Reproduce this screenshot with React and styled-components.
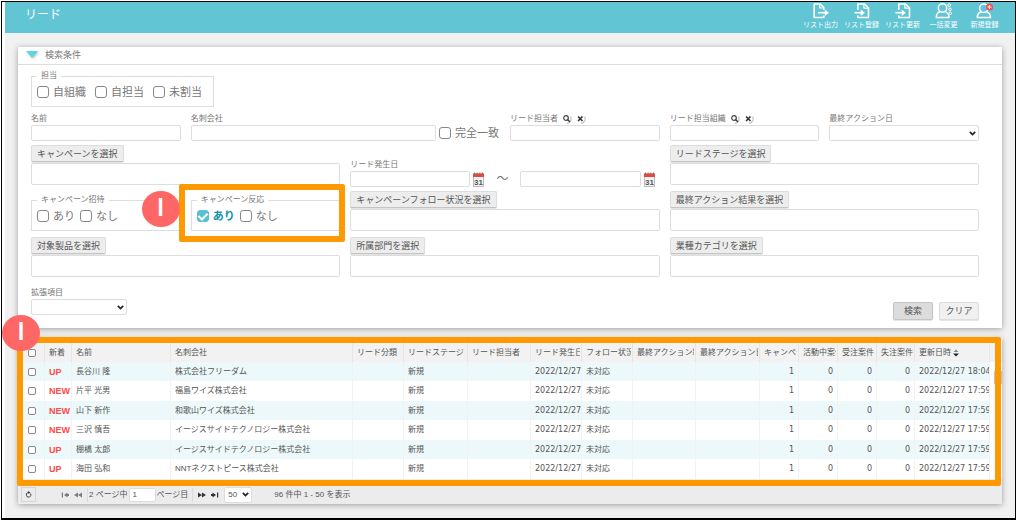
import React, { useState } from 'react';
import styled, { createGlobalStyle } from 'styled-components';

const GlobalStyle = createGlobalStyle`
  * { box-sizing: border-box; }
  body {
    margin: 0;
    background: #fff;
    color: #777;
    font-family: "Liberation Sans", "Noto Sans CJK JP", sans-serif;
    font-size: 8px;
    line-height: 12px;
  }
  button, input, select {
    font-family: inherit;
    color: inherit;
    margin: 0;
  }
`

const Frame = styled.div`
  display: flex;
  flex-direction: column;
  min-height: calc(100vh - 1px);
  margin: 1px 0 0 1px;
  padding-left: 3px;
  border: 1px solid #000;
  border-bottom-width: 2px;
`
const TopBar = styled.header`
  display: flex;
  justify-content: space-between;
  height: 31px;
  padding: 0 10px 0 20px;
  background: #62c5d4;
  color: #fff;
  h1 {
    margin: 0;
    font-size: 12px;
    font-weight: 400;
    line-height: 27px;
  }
`
const Tools = styled.nav`
  display: flex;
`
const ToolButton = styled.button`
  display: flex;
  flex-direction: column;
  align-items: center;
  width: 41px;
  padding: 0;
  border: 0;
  background: none;
  font-size: 7px;
  line-height: 10px;
  white-space: nowrap;
  svg {
    width: 18px;
    height: 18px;
  }
`
const Page = styled.main`
  display: flex;
  flex-direction: column;
  flex: 1;
  gap: 10px;
  padding: 14px 13px;
  background: #f1f1f1;
`
const Card = styled.section`
  background: #fff;
  box-shadow: 0 1px 6px rgba(0, 0, 0, 0.35);
`
const CardTitle = styled.button`
  display: flex;
  align-items: center;
  gap: 7px;
  width: 100%;
  height: 18px;
  padding: 0 8px 2px;
  border: 0;
  border-bottom: 1px solid #ddd;
  background: #fff;
  font-size: 9px;
  svg {
    width: 12px;
    height: 7px;
    filter: drop-shadow(1px 1px 1px rgba(0, 0, 0, 0.25));
  }
`
const Form = styled.form`
  padding: 6px 23px 8px 13px;
`
const Grid = styled.div`
  display: grid;
  grid-template-columns: repeat(6, minmax(0, 1fr));
  gap: 4px 10px;
  margin-top: 6px;
`
const Cell = styled.div`
  display: flex;
  flex-direction: column;
  align-self: end;
  grid-column: span ${props => props.$span || 1};
`
const Group = styled.fieldset`
  min-width: 0;
  width: ${props => (props.$inline ? 'fit-content' : '100%')};
  margin: 0 0 2px;
  padding: 5px 11px 8px 5px;
  border: 1px solid #ddd;
  legend {
    padding: 0 4px;
    line-height: 10px;
  }
`
const Options = styled.div`
  display: flex;
  gap: ${props => props.$gap || 5}px;
`
const CheckLabel = styled.label`
  display: flex;
  align-items: center;
  gap: 4px;
  font-size: 11px;
  line-height: 12px;
  white-space: nowrap;
  input:checked + span {
    color: #0b93ad;
    font-weight: 700;
  }
`
const CheckBox = styled.input.attrs({ type: 'checkbox' })`
  appearance: none;
  display: flex;
  align-items: center;
  justify-content: center;
  flex: none;
  width: ${props => (props.$small ? 8 : 12)}px;
  height: ${props => (props.$small ? 8 : 12)}px;
  border: 1px solid #888;
  border-radius: ${props => (props.$small ? 2 : 3)}px;
  background: #fff;
  &:checked {
    border-color: #5bbfd2;
    background: #5bbfd2;
  }
  &:checked::after {
    content: '';
    width: 4px;
    height: 7px;
    margin-bottom: 2px;
    border: solid #fff;
    border-width: 0 2px 2px 0;
    transform: rotate(45deg);
  }
`
const FieldLabel = styled.div`
  display: flex;
  align-items: center;
  gap: 4px;
  height: 12px;
  white-space: nowrap;
`
const TextBox = styled.input`
  width: 100%;
  min-width: 0;
  height: 16px;
  padding: 0 3px;
  border: 1px solid #ddd;
  border-radius: 2px;
  background: #fff;
  font-size: 8px;
`
const PickBox = styled(TextBox)`
  height: 22px;
  margin-bottom: 2px;
`
const SelectHolder = styled.div`
  display: grid;
  align-items: center;
  flex: none;
  width: ${props => props.$width || '100%'};
  > * {
    grid-area: 1 / 1;
  }
  svg {
    justify-self: end;
    margin-right: 3px;
    pointer-events: none;
  }
`
const SelectBox = styled.select`
  appearance: none;
  width: 100%;
  height: 16px;
  padding: 0 3px;
  border: 1px solid #ddd;
  border-radius: 2px;
  background: #fff;
  font-size: 8px;
`
const GreyButton = styled.button`
  align-self: flex-start;
  height: 17px;
  margin-bottom: 1px;
  padding: 0 5px;
  border: 1px solid #ddd;
  border-bottom-color: #c4c4c4;
  border-radius: 2px;
  background: #ededed;
  box-shadow: 0 1px 1px rgba(0, 0, 0, 0.12);
  color: #555;
  font-size: 9px;
  line-height: 14px;
  white-space: nowrap;
`
const SubmitButton = styled(GreyButton)`
  width: 40px;
  height: 18px;
  margin: 0;
  border-color: ${props => (props.$main ? '#c4c4c4' : '#ddd')};
  background: ${props => (props.$main ? '#dcdcdc' : '#f0f0f0')};
`
const IconButton = styled.button`
  display: flex;
  flex: none;
  padding: 0;
  border: 0;
  background: none;
`
const CompanyRow = styled.div`
  display: flex;
  align-items: center;
  gap: 3px;
  padding-right: 1px;
`
const DateRow = styled.div`
  display: flex;
  align-items: center;
  gap: 3px;
  padding-right: 5px;
  > span {
    flex: none;
    width: 30px;
    font-size: 12px;
    text-align: center;
  }
`
const FormFooter = styled.div`
  display: flex;
  align-items: flex-end;
  justify-content: space-between;
  margin-top: 8px;
`
const ExtraField = styled.div`
  padding-bottom: 5px;
`
const Buttons = styled.div`
  display: flex;
  gap: 6px;
`
const Marked = styled.div`
  position: relative;
`
const Marker = styled.div`
  position: absolute;
  z-index: 2;
  border: 6px solid #ff9900;
  border-radius: 2px;
  pointer-events: none;
`
const FieldMarker = styled(Marker)`
  inset: -11px -5px -9px -12px;
`
const ListMarker = styled(Marker)`
  inset: -1px 1px -7px -1px;
`
const Badge = styled.span`
  position: absolute;
  top: ${props => props.$top}px;
  left: ${props => props.$left}px;
  width: 38px;
  height: 36px;
  border-radius: 50%;
  background: #ff6666;
  color: #fff;
  font-family: Lato, sans-serif;
  font-size: 24px;
  font-weight: 700;
  line-height: 32px;
  text-align: center;
`
const ListArea = styled.div`
  position: relative;
  padding-top: 5px;
  background: #f2f2f2;
`
const Table = styled.table`
  width: 100%;
  border-collapse: separate;
  border-spacing: 0;
  table-layout: fixed;
  color: #555;
  th, td {
    padding: 0 0 0 4px;
    text-align: left;
    font-weight: 400;
  }
  th {
    height: 19px;
    border-right: 1px solid #e6e6e6;
  }
  th:last-child {
    border-right: 0;
  }
  td {
    height: 19px;
    border-right: 1px solid #f0f2f3;
  }
  tbody tr:nth-child(odd) td {
    background: #ecf8fa;
  }
  tbody tr:nth-child(even) td {
    height: 20px;
    background: #fff;
  }
  .check {
    padding-left: 10px;
  }
`
const Clip = styled.div`
  display: ${props => (props.$flex ? 'flex' : 'block')};
  align-items: center;
  gap: 2px;
  overflow: hidden;
  margin-right: ${props => (props.$num ? 4 : props.$head ? 1 : 0)}px;
  color: ${props => (props.$fresh ? '#ff4848' : 'inherit')};
  font-family: ${props => (props.$digits ? '"DejaVu Sans", "Noto Sans CJK JP", sans-serif' : 'inherit')};
  font-size: ${props => (props.$fresh ? 9 : 8)}px;
  font-weight: ${props => (props.$fresh ? 700 : 400)};
  text-align: ${props => (props.$num ? 'right' : 'left')};
  white-space: nowrap;
`
const ScrollTrack = styled.td`
  && {
    padding: 9px 0 0 4px;
    border: 0;
    background: #fff !important;
    vertical-align: top;
  }
`
const Thumb = styled.div`
  width: 8px;
  height: 13px;
  background: #c1c1c1;
`
const Pager = styled.div`
  display: flex;
  align-items: center;
  height: 25px;
  padding: 7px 3px 1px;
  background: #ececec;
  color: #555;
  white-space: nowrap;
`
const Refresh = styled(IconButton)`
  align-items: center;
  justify-content: center;
  width: 15px;
  height: 15px;
  margin-right: 25px;
  border: 1px solid #d6d6d6;
`
const PageStep = styled(IconButton)`
  margin-right: 5px;
  opacity: ${props => (props.disabled ? 0.6 : 1)};
`
const PageLabel = styled.label`
  display: flex;
  align-items: center;
  gap: 1px;
  margin-right: 5px;
  padding: 0 4px 0 1px;
  border: solid #dcdcdc;
  border-width: 0 1px;
`
const PageInput = styled(TextBox)`
  width: 27px;
  height: 14px;
`
const PageCount = styled.span`
  margin-left: 22px;
`

const ExportIcon = () => (
  <svg viewBox="0 0 18 18" fill="none" stroke="#fff" strokeWidth="1.6" strokeLinejoin="round">
    <path d="M11.8 8V5.5L8.3 2H2.200v13.500h9.600v-2" />
    <path d="M7.700 2v4h4" strokeWidth="1.200" />
    <path d="M6 10.700h8" />
    <path d="M12.800 7.500l4.200 3.200-4.200 3.200z" fill="#fff" stroke="none" />
  </svg>
)
const ImportIcon = () => (
  <svg viewBox="0 0 18 18" fill="none" stroke="#fff" strokeWidth="1.600" strokeLinejoin="round">
    <path d="M4.800 8V2h6.700L15.500 6v9.500H4.800v-2" />
    <path d="M10.900 2v4.200h4.600" strokeWidth="1.200" />
    <path d="M1.500 10.700h7" />
    <path d="M7.700 7.500l4.200 3.200-4.200 3.200z" fill="#fff" stroke="none" />
  </svg>
)
const BulkIcon = () => (
  <svg viewBox="0 0 18 18" fill="none" stroke="#fff" strokeWidth="1.500">
    <circle cx="7.500" cy="6" r="4.200" />
    <path d="M5 9.600C2.500 10.500 1.300 12 1.300 15.400h12.700c0-3.400-1.400-4.900-4-5.800" />
    <circle cx="14.200" cy="3.200" r="1.400" strokeWidth="1" />
    <circle cx="15" cy="7.300" r="1.300" strokeWidth="1" />
    <circle cx="15.200" cy="11.300" r="1.300" strokeWidth="1" />
  </svg>
)
const NewIcon = () => (
  <svg viewBox="0 0 18 18" fill="none" stroke="#fff" strokeWidth="1.500">
    <circle cx="7.800" cy="6.200" r="4.200" />
    <path d="M5.300 9.800C2.800 10.600 1.300 12 1.300 15.400h13.200c0-3.400-1.500-4.800-4.200-5.600" />
    <circle cx="13.500" cy="5" r="3.600" fill="#f4505a" stroke="none" />
    <path d="M11.500 5h4M13.500 3v4" strokeWidth="1" />
  </svg>
)
const SearchIcon = () => (
  <svg width="10" height="10" viewBox="0 0 10 10" fill="none">
    <path d="M8.500 2.500A4.500 4.500 0 0 1 5 9.300" stroke="#c4c4c4" strokeWidth="1.200" />
    <circle cx="4" cy="4" r="2.300" stroke="#444" strokeWidth="1.200" />
    <path d="M5.500 5.500l2.500 2.500" stroke="#444" strokeWidth="1.600" />
  </svg>
)
const ClearIcon = () => (
  <svg width="10" height="10" viewBox="0 0 10 10" fill="none">
    <path d="M8.500 2.500A4.500 4.500 0 0 1 5 9.300" stroke="#c4c4c4" strokeWidth="1.200" />
    <path d="M2 2.500l4.500 4.500M6.500 2.500L2 7" stroke="#333" strokeWidth="1.600" />
  </svg>
)
const CalendarIcon = () => (
  <svg width="11" height="15" viewBox="0 0 11 15">
    <rect x="0.500" y="2" width="10" height="12.500" fill="#f4f4f4" stroke="#bbb" />
    <rect x="0" y="1.500" width="11" height="3.500" fill="#e8473c" />
    <path d="M1.500 0.500v2M4.200 0.500v2M6.800 0.500v2M9.500 0.500v2" stroke="#777" />
    <text x="5.500" y="12.500" fontSize="8" fontWeight="700" textAnchor="middle" fill="#555">31</text>
  </svg>
)
const StepIcon = ({ back, end }) => (
  <svg width="8" height="6" viewBox="0 0 8 6" fill="#333">
    <g transform={back ? 'matrix(-1 0 0 1 8 0)' : undefined}>
      {end ? (
        <path d="M0 2h1.500V0.500L5 3 1.500 5.500V4H0zM6 0.500h1.200v5H6z" />
      ) : (
        <path d="M0 0.500L4 3 0 5.500zM4 0.500L8 3 4 5.500z" />
      )}
    </g>
  </svg>
)

const tools = [
  { text: 'リスト出力', Icon: ExportIcon },
  { text: 'リスト登録', Icon: ImportIcon },
  { text: 'リスト更新', Icon: ImportIcon },
  { text: '一括変更', Icon: BulkIcon },
  { text: '新規登録', Icon: NewIcon },
]

const columns = [
  { name: '新着', width: 27 },
  { name: '名前', width: 99 },
  { name: '名刺会社' },
  { name: 'リード分類', width: 51 },
  { name: 'リードステージ', width: 64 },
  { name: 'リード担当者', width: 63 },
  { name: 'リード発生日', width: 51 },
  { name: 'フォロー状況', width: 51 },
  { name: '最終アクション結果', width: 63 },
  { name: '最終アクション日', width: 64 },
  { name: 'キャンペーン', width: 39 },
  { name: '活動中案件', width: 39 },
  { name: '受注案件', width: 39 },
  { name: '失注案件', width: 38 },
  { name: '更新日時', width: 75, sorted: true },
]

const leads = [
  { state: 'UP', name: '長谷川 隆', company: '株式会社フリーダム', updated: '2022/12/27 18:04' },
  { state: 'NEW', name: '片平 光男', company: '福島ワイズ株式会社', updated: '2022/12/27 17:59' },
  { state: 'NEW', name: '山下 新作', company: '和歌山ワイズ株式会社', updated: '2022/12/27 17:59' },
  { state: 'NEW', name: '三沢 慎吾', company: 'イージスサイドテクノロジー株式会社', updated: '2022/12/27 17:59' },
  { state: 'UP', name: '棚橋 太郎', company: 'イージスサイドテクノロジー株式会社', updated: '2022/12/27 17:59' },
  { state: 'UP', name: '海田 弘和', company: 'NNTネクストピース株式会社', updated: '2022/12/27 17:59' },
]

const Check = ({ text, checked }) => (
  <CheckLabel>
    <CheckBox defaultChecked={checked} />
    <span>{text}</span>
  </CheckLabel>
)

const Select = ({ width, children, ...rest }) => (
  <SelectHolder $width={width}>
    <SelectBox {...rest}>{children}</SelectBox>
    <svg width="7" height="5" viewBox="0 0 7 5" fill="none" stroke="#222" strokeWidth="1.700">
      <path d="M0.800 0.800l2.700 2.700 2.700-2.700" />
    </svg>
  </SelectHolder>
)

const Field = ({ id, label, lookup, children }) => (
  <Cell>
    <FieldLabel>
      <label htmlFor={id}>{label}</label>
      {lookup ? (
        <>
          <IconButton type="button" aria-label={`${label}を検索`}><SearchIcon /></IconButton>
          <IconButton type="button" aria-label={`${label}をクリア`}><ClearIcon /></IconButton>
        </>
      ) : null}
    </FieldLabel>
    {children || <TextBox id={id} />}
  </Cell>
)

const Picker = ({ text }) => (
  <Cell $span={2}>
    <GreyButton type="button">{text}</GreyButton>
    <PickBox aria-label={text} readOnly />
  </Cell>
)

const SearchForm = () => (
  <Form onSubmit={e => e.preventDefault()}>
    <Group $inline>
      <legend>担当</legend>
      <Options $gap={9}>
        <Check text="自組織" />
        <Check text="自担当" />
        <Check text="未割当" />
      </Options>
    </Group>
    <Grid>
      <Field id="name" label="名前" />
      <Cell $span={2}>
        <FieldLabel><label htmlFor="company">名刺会社</label></FieldLabel>
        <CompanyRow>
          <TextBox id="company" />
          <Check text="完全一致" />
        </CompanyRow>
      </Cell>
      <Field id="owner" label="リード担当者" lookup />
      <Field id="team" label="リード担当組織" lookup />
      <Field id="lastAction" label="最終アクション日">
        <Select id="lastAction"><option></option></Select>
      </Field>

      <Picker text="キャンペーンを選択" />
      <Cell $span={2}>
        <FieldLabel><label htmlFor="from">リード発生日</label></FieldLabel>
        <DateRow>
          <TextBox id="from" />
          <IconButton type="button" aria-label="開始日"><CalendarIcon /></IconButton>
          <span>～</span>
          <TextBox aria-label="リード発生日の終わり" />
          <IconButton type="button" aria-label="終了日"><CalendarIcon /></IconButton>
        </DateRow>
      </Cell>
      <Picker text="リードステージを選択" />

      <Cell>
        <Group>
          <legend>キャンペーン招待</legend>
          <Options>
            <Check text="あり" />
            <Check text="なし" />
          </Options>
        </Group>
      </Cell>
      <Cell>
        <Marked>
          <Group>
            <legend>キャンペーン反応</legend>
            <Options>
              <Check text="あり" checked />
              <Check text="なし" />
            </Options>
          </Group>
          <FieldMarker>
            <Badge $top={1} $left={-43}>I</Badge>
          </FieldMarker>
        </Marked>
      </Cell>
      <Picker text="キャンペーンフォロー状況を選択" />
      <Picker text="最終アクション結果を選択" />

      <Picker text="対象製品を選択" />
      <Picker text="所属部門を選択" />
      <Picker text="業種カテゴリを選択" />
    </Grid>
    <FormFooter>
      <ExtraField>
        <FieldLabel><label htmlFor="extra">拡張項目</label></FieldLabel>
        <Select id="extra" width="96px"><option></option></Select>
      </ExtraField>
      <Buttons>
        <SubmitButton $main>検索</SubmitButton>
        <SubmitButton type="reset">クリア</SubmitButton>
      </Buttons>
    </FormFooter>
  </Form>
)

const LeadTable = () => (
  <Table>
    <colgroup>
      <col width="27" />
      {columns.map(c => <col key={c.name} width={c.width} />)}
      <col width="12" />
    </colgroup>
    <thead>
      <tr>
        <th className="check"><CheckBox $small aria-label="すべて選択" /></th>
        {columns.map(c => (
          <th key={c.name}>
            <Clip $head $flex={c.sorted}>
              {c.name}
              {c.sorted ? (
                <svg width="6" height="8" viewBox="0 0 6 8">
                  <path d="M0.500 3L3 0.500 5.500 3z" fill="#888" />
                  <path d="M0 4.500h6L3 7.500z" fill="#222" />
                </svg>
              ) : null}
            </Clip>
          </th>
        ))}
        <th />
      </tr>
    </thead>
    <tbody>
      {leads.map((lead, i) => (
        <tr key={lead.name}>
          <td className="check"><CheckBox $small aria-label={lead.name} /></td>
          <td><Clip $fresh>{lead.state}</Clip></td>
          <td><Clip>{lead.name}</Clip></td>
          <td><Clip>{lead.company}</Clip></td>
          <td />
          <td><Clip>新規</Clip></td>
          <td />
          <td><Clip $digits>2022/12/27</Clip></td>
          <td><Clip>未対応</Clip></td>
          <td />
          <td />
          <td><Clip $digits $num>1</Clip></td>
          <td><Clip $digits $num>0</Clip></td>
          <td><Clip $digits $num>0</Clip></td>
          <td><Clip $digits $num>0</Clip></td>
          <td><Clip $digits>{lead.updated}</Clip></td>
          {i === 0 ? <ScrollTrack rowSpan={leads.length}><Thumb /></ScrollTrack> : null}
        </tr>
      ))}
    </tbody>
  </Table>
)

const App = () => {
  const [open, setOpen] = useState(true)

  return (
    <>
      <GlobalStyle />
      <Frame>
        <TopBar>
          <h1>リード</h1>
          <Tools>
            {tools.map(({ text, Icon }) => (
              <ToolButton key={text} type="button"><Icon />{text}</ToolButton>
            ))}
          </Tools>
        </TopBar>
        <Page>
          <Card>
            <CardTitle type="button" aria-expanded={open} onClick={() => setOpen(!open)}>
              <svg viewBox="0 0 12 7"><path d="M0 0h12L6 7z" fill="#5fd6dc" /></svg>
              検索条件
            </CardTitle>
            {open ? <SearchForm /> : null}
          </Card>
          <Card>
            <ListArea>
              <LeadTable />
              <ListMarker>
                <Badge $top={-28} $left={-21}>I</Badge>
              </ListMarker>
            </ListArea>
            <Pager>
              <Refresh type="button" aria-label="更新">
                <svg width="7" height="7" viewBox="0 0 7 7" fill="none" stroke="#444">
                  <path d="M5.500 2.500A2.300 2.300 0 1 1 3.500 1.500" />
                  <path d="M3 0l2.500 1.500L3 3z" fill="#444" stroke="none" />
                </svg>
              </Refresh>
              <PageStep type="button" aria-label="最初" disabled><StepIcon back end /></PageStep>
              <PageStep type="button" aria-label="前へ" disabled><StepIcon back /></PageStep>
              <PageLabel>
                2 ページ中
                <PageInput defaultValue="1" />
                ページ目
              </PageLabel>
              <PageStep type="button" aria-label="次へ"><StepIcon /></PageStep>
              <PageStep type="button" aria-label="最後"><StepIcon end /></PageStep>
              <Select width="28px" aria-label="表示件数"><option>50</option></Select>
              <PageCount>96 件中 1 - 50 を表示</PageCount>
            </Pager>
          </Card>
        </Page>
      </Frame>
    </>
  )
}

export default App
